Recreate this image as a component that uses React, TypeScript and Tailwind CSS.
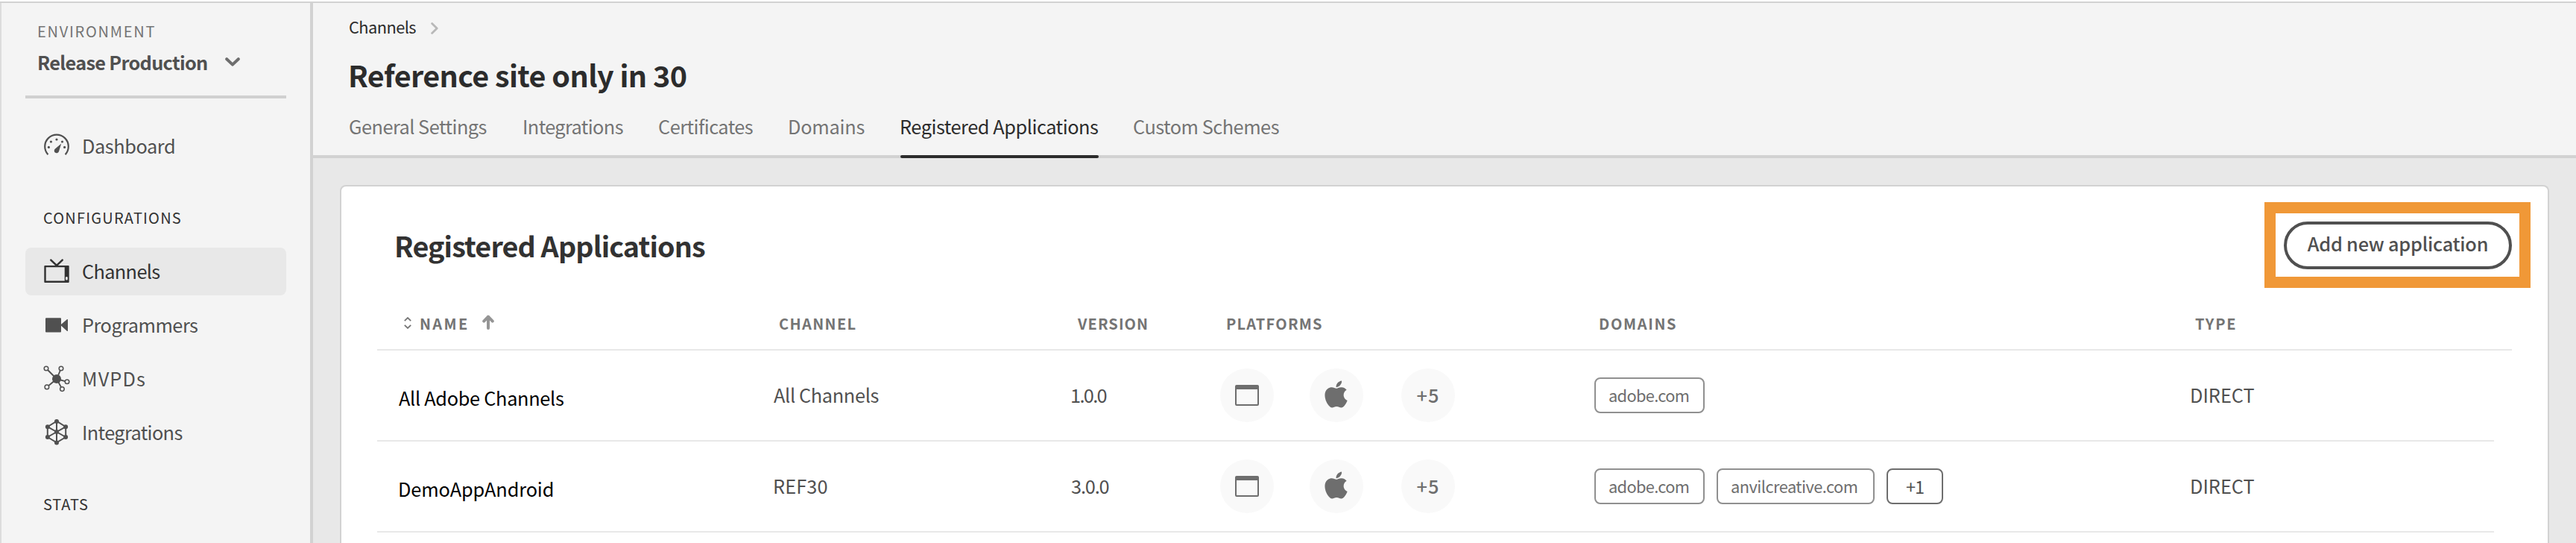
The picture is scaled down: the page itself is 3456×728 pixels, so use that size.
import React from "react";
import { FaApple } from "react-icons/fa";
import clsx from "clsx";

function GaugeIcon() {
  return (
    <svg viewBox="0 0 36 36" className="size-9 shrink-0" fill="none">
      <path d="M6.4 29.2a15.8 15.8 0 1 1 23.2 0" stroke="currentColor" strokeWidth="2.2" />
      <g fill="currentColor">
        <circle cx="7.4" cy="19.4" r="1.6" />
        <circle cx="10.4" cy="12" r="1.6" />
        <circle cx="18" cy="9" r="1.6" />
        <circle cx="25.5" cy="12" r="1.6" />
        <circle cx="28.6" cy="19.4" r="1.6" />
        <path d="M24.2 14.4 21 25a3.2 3.2 0 1 1-5.3-3.2z" />
      </g>
    </svg>
  );
}

function TvIcon() {
  return (
    <svg viewBox="0 0 36 36" className="size-9 shrink-0" fill="none">
      <path d="M10.3 2.6 18 10l7.7-7.4" stroke="currentColor" strokeWidth="2.6" strokeLinecap="round" />
      <path
        fill="currentColor"
        fillRule="evenodd"
        d="M2.3 10h31.4a1 1 0 0 1 1 1v21a1 1 0 0 1-1 1H2.3a1 1 0 0 1-1-1V11a1 1 0 0 1 1-1zM3.7 12.3v18.2h25V12.3zM31.4 25a1.4 1.4 0 0 0-1.4 1.4v1.8a1.4 1.4 0 0 0 2.8 0v-1.8a1.4 1.4 0 0 0-1.4-1.4z"
      />
    </svg>
  );
}

function CameraIcon() {
  return (
    <svg viewBox="0 0 36 36" className="size-9 shrink-0" fill="currentColor">
      <rect x="3" y="8.2" width="21" height="19.3" rx="1" />
      <path d="M23 17.8 31.8 10.3q1.2-.8 1.2.4v14.6q0 1.2-1.2.4z" />
    </svg>
  );
}

function HubIcon() {
  const nodes = [
    [4, 4],
    [24, 4],
    [32, 21.8],
    [25.4, 31.6],
    [4.9, 28.9],
  ];
  return (
    <svg viewBox="0 0 36 36" className="size-9 shrink-0 overflow-visible" stroke="currentColor" fill="none">
      {nodes.map(([x, y]) => (
        <g key={`${x}-${y}`}>
          <path d={`M18 18 ${x} ${y}`} strokeWidth="1.9" />
          <circle cx={x} cy={y} r="2.8" strokeWidth="1.5" className="fill-[#f4f4f4]" />
        </g>
      ))}
      <circle cx="18" cy="18" r="6" fill="currentColor" stroke="none" />
    </svg>
  );
}

function HexagonIcon() {
  return (
    <svg viewBox="0 0 36 36" className="size-9 shrink-0 overflow-visible" stroke="currentColor" fill="none">
      <path d="M18 2.7 30.2 10.2V24L18 31.3 5.8 24V10.2zM18 2.7v28.6M5.8 10.2 30.2 24M30.2 10.2 5.8 24" strokeWidth="2" />
      <g fill="currentColor" stroke="none">
        <circle cx="18" cy="2.9" r="3" />
        <circle cx="5.9" cy="10.2" r="3" />
        <circle cx="30.1" cy="10.2" r="3" />
        <circle cx="5.9" cy="24" r="3" />
        <circle cx="30.1" cy="24" r="3" />
        <circle cx="18" cy="31.4" r="3" />
        <circle cx="18" cy="17.1" r="3" />
      </g>
    </svg>
  );
}

const navItems = [
  { label: "Channels", icon: <TvIcon />, spacing: "tracking-[-0.64px]", active: true },
  { label: "Programmers", icon: <CameraIcon />, spacing: "tracking-[-0.5px]" },
  { label: "MVPDs", icon: <HubIcon />, spacing: "tracking-[1.1px]" },
  { label: "Integrations", icon: <HexagonIcon />, spacing: "tracking-[-0.62px]" },
];

function NavItem({
  label,
  icon,
  spacing,
  active,
}: {
  label: string;
  icon: React.ReactNode;
  spacing: string;
  active?: boolean;
}) {
  return (
    <a
      className={clsx(
        "flex h-16 items-center gap-4 rounded-lg pl-6",
        active ? "bg-[#e8e8e8] text-[#323232]" : "text-[#505050]",
      )}
    >
      {icon}
      <span className={clsx("pb-0.5 text-[25.3px] leading-8", spacing)}>{label}</span>
    </a>
  );
}

function Sidebar() {
  return (
    <aside className="w-[420px] shrink-0 border-r-4 border-l-2 border-r-[#d2d2d2] border-l-[#dcdcdc] bg-[#f4f4f4] pr-8 pl-8">
      <div className="pt-[26px] pl-4">
        <div className="text-[20px] leading-6 tracking-[1.74px] text-[#747474]">ENVIRONMENT</div>
        <div className="mt-[13px] flex items-center gap-[23px] text-[#505050]">
          <span className="text-[25.3px] leading-8 font-bold tracking-[-0.7px]">Release Production</span>
          <svg viewBox="0 0 20 12" className="h-3 w-5 text-[#6e6e6e]" fill="none">
            <path d="M2.2 2.2 10 9.6l7.8-7.4" stroke="currentColor" strokeWidth="4" strokeLinecap="round" strokeLinejoin="round" />
          </svg>
        </div>
      </div>
      <div className="mt-[29px] h-1 bg-[#d0d0d0]" />
      <nav className="mt-8 flex flex-col">
        <NavItem label="Dashboard" icon={<GaugeIcon />} spacing="tracking-[-0.4px]" />
        <div className="mt-[52px] mb-7 pl-6 text-[20px] leading-6 tracking-[1.2px] text-[#323232]">
          CONFIGURATIONS
        </div>
        <div className="flex flex-col gap-2">
          {navItems.map((item) => (
            <NavItem key={item.label} {...item} />
          ))}
        </div>
        <div className="mt-[52px] pl-6 text-[20px] leading-6 tracking-[0.85px] text-[#323232]">STATS</div>
      </nav>
    </aside>
  );
}

const tabs = [
  { label: "General Settings", box: "w-[234px]", text: "tracking-[-0.5px]" },
  { label: "Integrations", box: "w-[182px]", text: "-ml-px tracking-[-0.6px]" },
  { label: "Certificates", box: "w-[174px]", text: "-ml-px tracking-[-0.5px]" },
  { label: "Domains", box: "w-[150px]", text: "-ml-px tracking-[-0.22px]" },
  { label: "Registered Applications", box: "w-[266px] mr-[47px]", text: "-ml-px tracking-[-0.44px]", active: true },
  { label: "Custom Schemes", box: "w-[200px]", text: "-ml-px tracking-[-0.48px]" },
];

function PageHeader() {
  return (
    <header className="h-[208px] border-b-4 border-[#d2d2d2] bg-[#f4f4f4] pt-[18px] pl-12">
      <div className="flex items-center gap-5 text-[21.8px] leading-7 tracking-[-0.57px] text-[#2c2c2c]">
        <span>Channels</span>
        <svg viewBox="0 0 10 16" className="mt-[3px] h-4 w-2.5" fill="none">
          <path d="M1.6 1.6 8.2 8l-6.6 6.4" stroke="#b8b8b8" strokeWidth="2.8" strokeLinecap="round" strokeLinejoin="round" />
        </svg>
      </div>
      <h1 className="mt-[26px] -ml-px text-[39.5px] leading-[48px] font-bold tracking-[-0.6px] text-[#2c2c2c]">
        Reference site only in 30
      </h1>
      <div className="mt-[29px] flex">
        {tabs.map((tab) => (
          <div
            key={tab.label}
            className={clsx("flex h-[59px] flex-col justify-between", tab.box, tab.active ? "text-[#2c2c2c]" : "text-[#747474]")}
          >
            <span className={clsx("text-[25.3px] leading-8 whitespace-nowrap", tab.text)}>{tab.label}</span>
            {tab.active && <span className="h-1 rounded-sm bg-[#2c2c2c]" />}
          </div>
        ))}
      </div>
    </header>
  );
}

const columns = "grid grid-cols-[532px_399px_200px_501px_800px_1fr]";

function TableHeader() {
  return (
    <div
      className={clsx(
        columns,
        "mr-12 ml-12 h-[109px] border-b-2 border-[#e8e8e8] pt-[61px] text-[20px] leading-6 font-bold text-[#747474]",
      )}
    >
      <div className="flex pl-[36px]">
        <svg viewBox="0 0 10 16" className="mt-[3px] h-4 w-2.5" fill="none" stroke="#747474" strokeWidth="1.8">
          <path d="M.8 5.2 5 1.1l4.2 4.1M.8 10.8 5 14.9l4.2-4.1" />
        </svg>
        <span className="ml-[11px] w-[84px] tracking-[2.37px]">NAME</span>
        <svg viewBox="0 0 16 20" className="h-5 w-4" fill="none" stroke="#959595" strokeWidth="4" strokeLinecap="round">
          <path d="M8 3v15" />
          <path d="M2.2 8.6 8 2.6l5.8 6" strokeLinejoin="round" />
        </svg>
      </div>
      <span className="pl-[7px] tracking-[1.37px]">CHANNEL</span>
      <span className="pl-[9px] tracking-[1.1px]">VERSION</span>
      <span className="pl-2 tracking-[1.24px]">PLATFORMS</span>
      <span className="pl-[7px] tracking-[1.65px]">DOMAINS</span>
      <span className="pl-[7px] tracking-[1.73px]">TYPE</span>
    </div>
  );
}

function Platforms({ more }: { more: string }) {
  return (
    <div className="flex items-center text-[#6e6e6e]">
      <span className="flex size-[72px] items-center justify-center rounded-full bg-[#f9f9f9]">
        <span className="h-7 w-8 rounded-[2px] border-2 border-t-[6px] border-[#6e6e6e]" />
      </span>
      <span className="ml-12 flex size-[72px] items-center justify-center rounded-full bg-[#f9f9f9] pr-0.5 pb-[3px]">
        <FaApple className="size-[41px]" />
      </span>
      <span className="ml-[51px] flex size-[72px] items-center justify-center rounded-full bg-[#f9f9f9] pb-0.5 text-[25.3px] leading-8 font-medium tracking-[1.1px]">
        {more}
      </span>
    </div>
  );
}

const rows = [
  {
    name: "All Adobe Channels",
    nameClass: "tracking-[-0.29px]",
    channel: "All Channels",
    channelClass: "tracking-[-0.34px]",
    version: "1.0.0",
    versionClass: "-ml-px tracking-[-1.65px]",
    chips: [{ label: "adobe.com", chip: "w-[148px] tracking-[-0.68px]" }],
    extra: null,
  },
  {
    name: "DemoAppAndroid",
    nameClass: "-ml-px tracking-[-0.12px]",
    channel: "REF30",
    channelClass: "-ml-px tracking-[0.13px]",
    version: "3.0.0",
    versionClass: "tracking-[-1.15px]",
    chips: [
      { label: "adobe.com", chip: "w-[148px] tracking-[-0.68px]" },
      { label: "anvilcreative.com", chip: "w-[212px] tracking-[-0.53px]" },
    ],
    extra: "+1",
  },
];

function Row({ row }: { row: (typeof rows)[number] }) {
  return (
    <div
      className={clsx(
        columns,
        "mr-[72px] ml-12 h-[122px] items-center border-b-2 border-[#e8e8e8] text-[25.3px] leading-8 text-[#505050]",
      )}
    >
      <span className="pt-1.5 pl-[29px] text-black">
        <span className={row.nameClass}>{row.name}</span>
      </span>
      <span className="pb-0.5">
        <span className={row.channelClass}>{row.channel}</span>
      </span>
      <span className="pb-0.5">
        <span className={row.versionClass}>{row.version}</span>
      </span>
      <Platforms more="+5" />
      <div className="flex gap-4 pl-px">
        {row.chips.map((c) => (
          <span
            key={c.label}
            className={clsx(
              "flex h-12 items-center rounded-lg border-2 border-[#909090] pl-[17px] text-[21.8px] text-[#6e6e6e]",
              c.chip,
            )}
          >
            {c.label}
          </span>
        ))}
        {row.extra && (
          <span className="flex h-12 w-[76px] items-center justify-center rounded-lg border-2 border-[#6e6e6e] text-[23.6px] tracking-[-1px]">
            {row.extra}
          </span>
        )}
      </div>
      <span className="pb-0.5">DIRECT</span>
    </div>
  );
}

function ApplicationsCard() {
  return (
    <section className="grow rounded-t-lg border-2 border-b-0 border-[#d2d2d2] bg-white">
      <div className="flex items-center justify-between pt-[47px] pr-12 pl-[71px]">
        <h2 className="text-[37.7px] leading-[48px] font-bold tracking-[-0.87px] text-[#323232]">
          Registered Applications
        </h2>
        <div className="relative">
          <button className="flex h-16 w-[306px] items-center justify-center rounded-full border-4 border-[#505050] pb-[7px] text-[25.3px] leading-8 font-medium tracking-[-0.23px] text-[#505050]">
            Add new application
          </button>
          <div className="pointer-events-none absolute -top-[26px] -right-[25px] -bottom-[25px] -left-[26px] border-[15px] border-[#f09837]" />
        </div>
      </div>
      <TableHeader />
      {rows.map((row) => (
        <Row key={row.name} row={row} />
      ))}
    </section>
  );
}

export default function App() {
  return (
    <div className="flex h-[728px] w-full flex-col overflow-hidden bg-white pt-0.5 font-['Noto_Sans_CJK_SC','Noto_Sans',sans-serif]">
      <div className="flex min-h-0 grow border-t-2 border-[#d2d2d2]">
        <Sidebar />
        <div className="flex min-w-0 grow flex-col">
          <PageHeader />
          <main className="flex grow flex-col bg-[#e8e8e8] px-9 pt-9">
            <ApplicationsCard />
          </main>
        </div>
      </div>
    </div>
  );
}
